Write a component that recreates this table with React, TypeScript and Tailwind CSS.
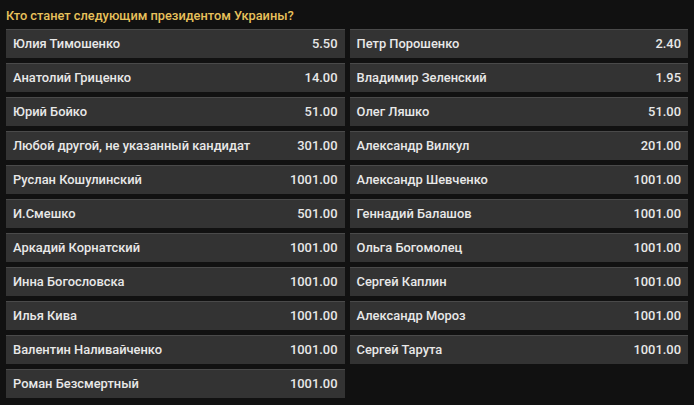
const left: [string, string][] = [
  ["Юлия Тимошенко", "5.50"],
  ["Анатолий Гриценко", "14.00"],
  ["Юрий Бойко", "51.00"],
  ["Любой другой, не указанный кандидат", "301.00"],
  ["Руслан Кошулинский", "1001.00"],
  ["И.Смешко", "501.00"],
  ["Аркадий Корнатский", "1001.00"],
  ["Инна Богословска", "1001.00"],
  ["Илья Кива", "1001.00"],
  ["Валентин Наливайченко", "1001.00"],
  ["Роман Безсмертный", "1001.00"],
];

const right: [string, string][] = [
  ["Петр Порошенко", "2.40"],
  ["Владимир Зеленский", "1.95"],
  ["Олег Ляшко", "51.00"],
  ["Александр Вилкул", "201.00"],
  ["Александр Шевченко", "1001.00"],
  ["Геннадий Балашов", "1001.00"],
  ["Ольга Богомолец", "1001.00"],
  ["Сергей Каплин", "1001.00"],
  ["Александр Мороз", "1001.00"],
  ["Сергей Тарута", "1001.00"],
];

function Row({ name, odds }: { name: string; odds: string }) {
  return (
    <div className="flex h-[29px] items-center justify-between border-t border-[#4a4a4a] bg-[#333333] pl-[7px] pr-[7px] text-[12.9px] font-medium text-[#e8e8e8]">
      <span>{name}</span>
      <span>{odds}</span>
    </div>
  );
}

export default function App() {
  return (
    <div className="h-[405px] w-[694px] bg-[#111111] px-[6px] font-['Roboto',sans-serif]">
      <h1 className="flex h-[29px] items-center pt-[2px] text-[12.8px] font-medium text-[#e8c15c]">
        Кто станет следующим президентом Украины?
      </h1>
      <div className="grid grid-cols-2 gap-[5px]">
        <div className="flex flex-col gap-[5px]">
          {left.map(([n, o]) => (
            <Row key={n} name={n} odds={o} />
          ))}
        </div>
        <div className="flex flex-col gap-[5px]">
          {right.map(([n, o]) => (
            <Row key={n} name={n} odds={o} />
          ))}
        </div>
      </div>
    </div>
  );
}
